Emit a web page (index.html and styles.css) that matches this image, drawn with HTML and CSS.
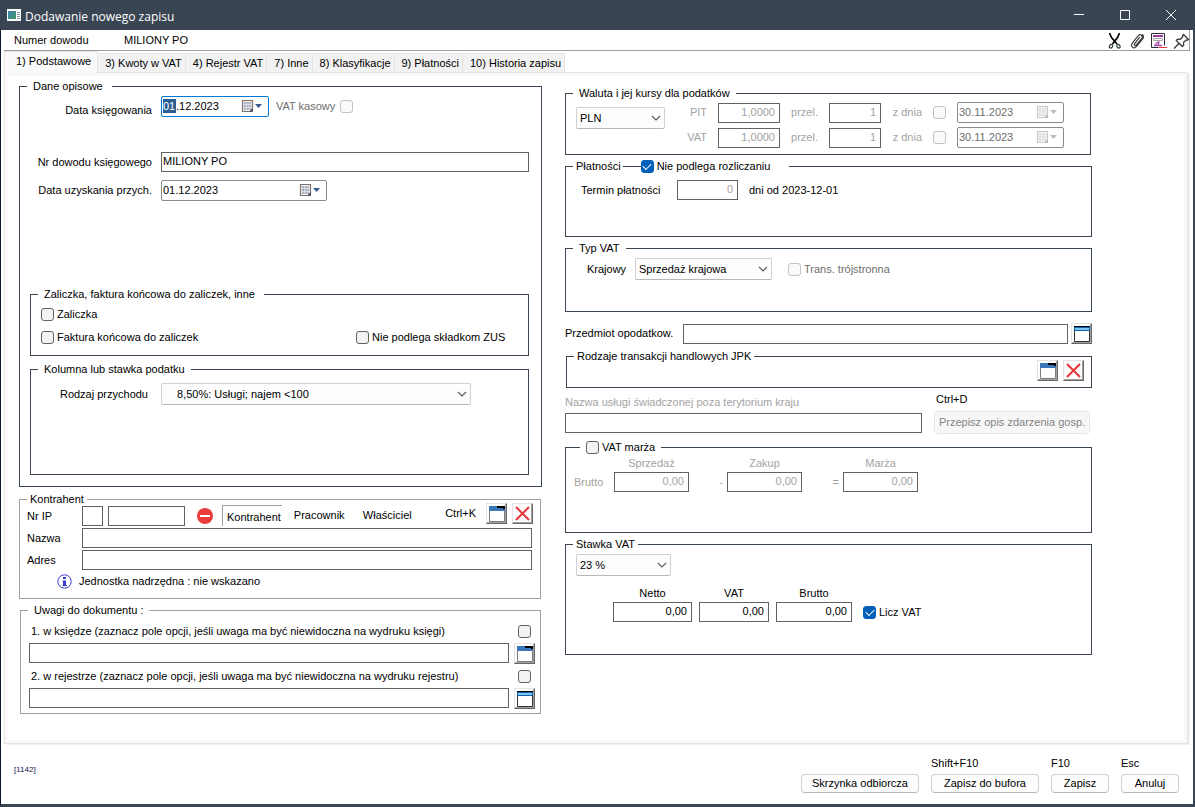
FILE: index.html
```html
<!DOCTYPE html>
<html lang="pl">
<head>
<meta charset="utf-8">
<meta name="viewport" content="width=device-width, initial-scale=1">
<title>Dodawanie nowego zapisu</title>
<link rel="stylesheet" href="styles.css">
</head>
<body>
<svg class="sprite" aria-hidden="true">
  <defs>
    <linearGradient id="app-fill" x1="0" y1="0" x2="1" y2="1"><stop offset="0" stop-color="#3f7fb5"/><stop offset="1" stop-color="#3f9a63"/></linearGradient>
  </defs>
  <symbol id="i-chevron" viewBox="0 0 10 6"><path d="M1 1l4 4 4-4" fill="none" stroke="#5a5a5a" stroke-width="1.1"/></symbol>
  <symbol id="i-calendar" viewBox="0 0 22 14">
    <path d="M1.500 1.500h10v9l-2 2h-8z" fill="#f4f1f0" stroke="#7d7270" stroke-width="1.200"/>
    <path d="M11.500 9.500v3h-2.500z" fill="#55505a" stroke="#55505a"/>
    <path d="M3 3h7v8H3z" fill="#a9afc0"/>
    <path d="M3 5.500h7M3 8.500h7M5.500 3v8M8 3v8" stroke="#fff" stroke-width=".5"/>
    <path d="M14 5h7l-3.500 4z" fill="#3d5a8c"/>
  </symbol>
  <symbol id="i-window" viewBox="0 0 16 16">
    <path d="M.5 3.500h15v12H.5z" fill="#fff" stroke="#7a7a7a"/><path d="M0 0h16v5H0z" fill="#3a76b8"/><path d="M8 0h8v3h-2V2H8z" fill="#000"/>
  </symbol>
  <symbol id="i-window-on" viewBox="0 0 16 16">
    <path d="M.5 3.500h15v12H.5z" fill="#fff" stroke="#333"/><path d="M0 0h16v1H0z" fill="#000"/><path d="M0 1h16v4H0z" fill="#0c62ae"/><path d="M1 2h14v2H1z" fill="#7cc4f2"/>
  </symbol>
  <symbol id="i-delete" viewBox="0 0 16 16"><path d="M1 1l13 13M14 1L1 14" stroke="#e8353a" stroke-width="2"/></symbol>
</svg>

<div class="window">
  <header class="titlebar">
    <svg class="app-icon" width="14" height="12" viewBox="0 0 14 12" aria-hidden="true"><path d="M0 0h14v12H0z" fill="#fff"/><path d="M1 2h8v8H1z" fill="url(#app-fill)"/><path d="M10 3.500h3M10 5.500h3M10 7.500h3M10 9.500h3" stroke="#8b9aa5"/></svg>
    <h1 class="title">Dodawanie nowego zapisu</h1>
    <div class="window-actions">
      <button type="button" aria-label="Minimalizuj"><svg width="10" height="10"><path d="M0 4.500h10" stroke="#fff"/></svg></button>
      <button type="button" aria-label="Maksymalizuj"><svg width="10" height="10"><path d="M.5.5h9v9h-9z" fill="none" stroke="#fff"/></svg></button>
      <button type="button" aria-label="Zamknij"><svg width="10" height="10"><path d="M0 0l10 10M10 0L0 10" stroke="#fff"/></svg></button>
    </div>
  </header>

  <div class="infobar">
    <span class="infobar-label">Numer dowodu</span>
    <span>MILIONY PO</span>
    <div class="tools">
      <button type="button" aria-label="Wytnij"><svg width="16" height="18" viewBox="0 0 16 18"><path d="M2.500 1l2 4.500L10 12M12.500 1l-2 4.500L5.500 12" fill="none" stroke="#000" stroke-width="1.700"/><ellipse cx="4" cy="14.200" rx="1.500" ry="2" fill="none" stroke="#2a3c38" stroke-width="1.200" transform="rotate(35 4 14.200)"/><ellipse cx="11.500" cy="14.200" rx="1.500" ry="2" fill="none" stroke="#2a3c38" stroke-width="1.200" transform="rotate(-35 11.500 14.200)"/></svg></button>
      <button type="button" aria-label="Załącznik"><svg width="16" height="18" viewBox="0 0 16 18"><path d="M10.800 5.200L5.600 11.700c-.9 1.300.8 2.500 1.800 1.300L12.600 6.500c2-2.800-1.300-5.200-3.500-2.700L3.300 11c-2.400 3.300 1.400 6.600 4.200 3.400L13.900 6.700c1.200-2 .2-3.600-.8-4.400" fill="none" stroke="#3c3c3c" stroke-width="1.200"/></svg></button>
      <button type="button" aria-label="Dokument"><svg width="16" height="18" viewBox="0 0 16 18"><path d="M7.500 15.500H.5v-14h13v12" fill="#fff" stroke="#2c2c3a"/><path d="M2 3h10v2H2z" fill="#9a3f9f"/><path d="M2.500 6.500h9v2h-9z" fill="#fff" stroke="#aaa"/><path d="M8.500 10C5 10 4 13 5.500 13.500S9 10.500 7.500 9.500M3 13.500h8" fill="none" stroke="#a84fae" stroke-width="1.300"/><path d="M8 15.500h8" stroke="#e8353a"/></svg></button>
      <button type="button" aria-label="Przypnij"><svg width="16" height="18" viewBox="0 0 16 18"><path d="M10.500 2.500l5 5-1.400.8-1-.3-2.600 2.600.2 2.700-1.400 1.200-6-6 1.200-1.400 2.700.2L9.800 4.700l-.3-1zM6 11.500l-5 5" fill="none" stroke="#3c3c3c" stroke-width="1.300"/></svg></button>
    </div>
  </div>

  <nav class="tabs" role="tablist">
    <button type="button" class="tab active" role="tab" aria-selected="true">1) Podstawowe</button>
    <button type="button" class="tab" role="tab">3) Kwoty w VAT</button>
    <button type="button" class="tab" role="tab">4) Rejestr VAT</button>
    <button type="button" class="tab" role="tab">7) Inne</button>
    <button type="button" class="tab" role="tab">8) Klasyfikacje</button>
    <button type="button" class="tab" role="tab">9) Płatności</button>
    <button type="button" class="tab" role="tab">10) Historia zapisu</button>
  </nav>

  <main class="page">
    <div class="column">
      <fieldset class="panel describe">
        <legend class="wide">Dane opisowe</legend>
        <div class="field-row first">
          <label for="booking-day" class="low">Data księgowania</label>
          <div class="inline">
            <div class="date focused">
              <input id="booking-day" class="day" value="01"><input class="rest" aria-label="Miesiąc i rok" value=".12.2023">
              <button type="button" aria-label="Kalendarz"><svg width="22" height="14"><use href="#i-calendar"/></svg></button>
            </div>
            <label class="check off after">VAT kasowy <input type="checkbox" disabled></label>
          </div>
        </div>
        <div class="field-row">
          <label for="doc-no">Nr dowodu księgowego</label>
          <input id="doc-no" class="box" value="MILIONY PO">
        </div>
        <div class="field-row">
          <label for="income-date">Data uzyskania przych.</label>
          <div class="date long">
            <input id="income-date" class="rest" value="01.12.2023">
            <button type="button" aria-label="Kalendarz"><svg width="22" height="14"><use href="#i-calendar"/></svg></button>
          </div>
        </div>

        <fieldset class="panel advance">
          <legend class="wide">Zaliczka, faktura końcowa do zaliczek, inne</legend>
          <label class="check"><input type="checkbox"> Zaliczka</label>
          <div class="split">
            <label class="check"><input type="checkbox"> Faktura końcowa do zaliczek</label>
            <label class="check"><input type="checkbox"> Nie podlega składkom ZUS</label>
          </div>
        </fieldset>

        <fieldset class="panel rate">
          <legend class="mid">Kolumna lub stawka podatku</legend>
          <div class="rate-row">
            <label for="income-kind">Rodzaj przychodu</label>
            <div class="select indent"><select id="income-kind"><option>8,50%: Usługi; najem &lt;100</option></select><svg width="10" height="6"><use href="#i-chevron"/></svg></div>
          </div>
        </fieldset>
      </fieldset>

      <fieldset class="panel soft partner">
        <legend>Kontrahent</legend>
        <div class="partner-row ids">
          <label for="nip-prefix">Nr IP</label>
          <div class="ids-fields">
            <input id="nip-prefix" class="box prefix"><input class="box nip" aria-label="Numer">
            <button type="button" class="stop" aria-label="Wyczyść"><svg width="16" height="16"><circle cx="8" cy="8" r="8" fill="#ea3a3a"/><path d="M3 8h10" stroke="#fff" stroke-width="2"/></svg></button>
            <div class="kinds">
              <button type="button" class="kind selected">Kontrahent</button>
              <button type="button" class="kind">Pracownik</button>
              <button type="button" class="kind">Właściciel</button>
            </div>
            <div class="shortcuts">
              <span>Ctrl+K</span>
              <button type="button" class="icon-button" aria-label="Wybierz"><svg width="16" height="16"><use href="#i-window"/></svg></button>
              <button type="button" class="icon-button" aria-label="Usuń"><svg width="16" height="16"><use href="#i-delete"/></svg></button>
            </div>
          </div>
        </div>
        <div class="partner-row"><label for="name">Nazwa</label><input id="name" class="box"></div>
        <div class="partner-row"><label for="address">Adres</label><input id="address" class="box"></div>
        <p class="parent-unit"><svg width="15" height="15" viewBox="0 0 15 15" aria-hidden="true"><circle cx="7.500" cy="7.500" r="6.700" fill="none" stroke="#3a3fd0"/><path d="M6 3h3v2H6zM5.500 6.500H9V11h1v1H5.500v-1H6V7.500h-.5z" fill="#3a3fd0"/></svg>Jednostka nadrzędna : nie wskazano</p>
      </fieldset>

      <fieldset class="panel soft notes">
        <legend class="mid">Uwagi do dokumentu :</legend>
        <div class="note-head"><label for="note-book">1. w księdze (zaznacz pole opcji, jeśli uwaga ma być niewidoczna na wydruku księgi)</label><input type="checkbox" aria-label="Ukryj na wydruku księgi"></div>
        <div class="note-body"><input id="note-book" class="box"><button type="button" class="icon-button" aria-label="Wybierz uwagę"><svg width="16" height="16"><use href="#i-window"/></svg></button></div>
        <div class="note-head"><label for="note-reg">2. w rejestrze (zaznacz pole opcji, jeśli uwaga ma być niewidoczna na wydruku rejestru)</label><input type="checkbox" aria-label="Ukryj na wydruku rejestru"></div>
        <div class="note-body"><input id="note-reg" class="box"><button type="button" class="icon-button" aria-label="Wybierz uwagę"><svg width="16" height="16"><use href="#i-window-on"/></svg></button></div>
      </fieldset>
    </div>

    <div class="column right">
      <fieldset class="panel currency">
        <legend class="mid">Waluta i jej kursy dla podatków</legend>
        <div class="currency-body">
          <div class="select cur"><select aria-label="Waluta"><option>PLN</option></select><svg width="10" height="6"><use href="#i-chevron"/></svg></div>
          <div class="rates">
            <div class="rate-line">
              <label for="pit">PIT</label><input id="pit" class="box num" value="1,0000" disabled>
              <label for="pit-per">przel.</label><input id="pit-per" class="box num" value="1" disabled>
              <label for="pit-on">z dnia</label><input id="pit-on" type="checkbox" disabled>
              <div class="date off"><input class="rest" aria-label="Data kursu PIT" value="30.11.2023" disabled><button type="button" aria-label="Kalendarz" disabled><svg width="22" height="14"><use href="#i-calendar"/></svg></button></div>
            </div>
            <div class="rate-line">
              <label for="vat">VAT</label><input id="vat" class="box num" value="1,0000" disabled>
              <label for="vat-per">przel.</label><input id="vat-per" class="box num" value="1" disabled>
              <label for="vat-on">z dnia</label><input id="vat-on" type="checkbox" disabled>
              <div class="date off"><input class="rest" aria-label="Data kursu VAT" value="30.11.2023" disabled><button type="button" aria-label="Kalendarz" disabled><svg width="22" height="14"><use href="#i-calendar"/></svg></button></div>
            </div>
          </div>
        </div>
      </fieldset>

      <fieldset class="panel payment">
        <legend class="with-check"><span>Płatności</span><span class="rule"></span><label class="check"><input type="checkbox" checked> Nie podlega rozliczaniu</label></legend>
        <div class="payment-row">
          <label for="term">Termin płatności</label><input id="term" class="box num" value="0" disabled><span>dni od 2023-12-01</span>
        </div>
      </fieldset>

      <fieldset class="panel vat-type">
        <legend class="mid">Typ VAT</legend>
        <div class="vat-type-row">
          <label for="vat-kind">Krajowy</label>
          <div class="select kind-select"><select id="vat-kind"><option>Sprzedaż krajowa</option></select><svg width="10" height="6"><use href="#i-chevron"/></svg></div>
          <label class="check off"><input type="checkbox" disabled> Trans. trójstronna</label>
        </div>
      </fieldset>

      <div class="subject">
        <label for="subject">Przedmiot opodatkow.</label><input id="subject" class="box">
        <button type="button" class="icon-button" aria-label="Wybierz przedmiot"><svg width="16" height="16"><use href="#i-window-on"/></svg></button>
      </div>

      <fieldset class="panel jpk">
        <legend>Rodzaje transakcji handlowych JPK</legend>
        <div class="jpk-actions">
          <button type="button" class="icon-button" aria-label="Wybierz rodzaj"><svg width="16" height="16"><use href="#i-window"/></svg></button>
          <button type="button" class="icon-button" aria-label="Usuń rodzaj"><svg width="16" height="16"><use href="#i-delete"/></svg></button>
        </div>
      </fieldset>

      <div class="service">
        <label for="service" class="muted">Nazwa usługi świadczonej poza terytorium kraju</label>
        <span class="hint">Ctrl+D</span>
        <input id="service" class="box">
        <button type="button" class="button" disabled>Przepisz opis zdarzenia gosp.</button>
      </div>

      <fieldset class="panel margin">
        <legend class="lead-check"><label class="check"><input type="checkbox"> VAT marża</label></legend>
        <div class="margin-grid muted">
          <span></span><label for="sale">Sprzedaż</label><span></span><label for="buy">Zakup</label><span></span><label for="diff">Marża</label>
          <span>Brutto</span><input id="sale" class="box num" value="0,00" disabled><span class="op">-</span><input id="buy" class="box num" value="0,00" disabled><span class="op">=</span><input id="diff" class="box num" value="0,00" disabled>
        </div>
      </fieldset>

      <fieldset class="panel vat-rate">
        <legend>Stawka VAT</legend>
        <div class="select rate-select"><select aria-label="Stawka VAT"><option>23 %</option></select><svg width="10" height="6"><use href="#i-chevron"/></svg></div>
        <div class="amounts">
          <div class="amount net"><label for="net">Netto</label><input id="net" class="box num" value="0,00"></div>
          <div class="amount tax"><label for="tax">VAT</label><input id="tax" class="box num" value="0,00"></div>
          <div class="amount gross"><label for="gross">Brutto</label><input id="gross" class="box num" value="0,00"></div>
          <label class="check calc"><input type="checkbox" checked> Licz VAT</label>
        </div>
      </fieldset>
    </div>
  </main>

  <footer class="footer">
    <span class="code">[1142]</span>
    <div class="action inbox"><button type="button" class="button">Skrzynka odbiorcza</button></div>
    <div class="action buffer"><span>Shift+F10</span><button type="button" class="button">Zapisz do bufora</button></div>
    <div class="action"><span>F10</span><button type="button" class="button">Zapisz</button></div>
    <div class="action"><span>Esc</span><button type="button" class="button">Anuluj</button></div>
  </footer>
</div>
</body>
</html>
```
FILE: styles.css
```css
* { box-sizing: border-box; }

body {
  margin: 0;
  background: #fff;
  color: #000;
  font: 11px/13px "Liberation Sans", Arial, sans-serif;
}

button, input, select { font: inherit; color: inherit; margin: 0; }
button { padding: 0; border: 0; background: none; }
svg { display: block; }
.sprite { position: absolute; width: 0; height: 0; }

.window {
  display: flex;
  flex-direction: column;
  min-height: 100vh;
  border: solid #3a4553;
  border-width: 0 2px 3px 1px;
  border-left-color: #0c1830;
}

/* Title bar */
.titlebar {
  display: flex;
  align-items: center;
  height: 30px;
  margin: 0 -1px;
  padding-left: 7px;
  background: #3a4553;
  color: #fff;
}
.title { margin: 3px 0 0 4px; font: 12px/16px "Open Sans", "Noto Sans", sans-serif; }
.window-actions { display: flex; margin-left: auto; }
.window-actions button { display: grid; place-items: center; width: 46px; height: 28px; }

/* Document number strip */
.infobar {
  display: flex;
  align-items: center;
  height: 21px;
  margin: 0 3px;
  padding-left: 10px;
  border: solid #a0a0a0;
  border-width: 0 1px 1px 0;
}
.infobar-label { width: 110px; }
.tools { display: flex; gap: 6px; margin-left: auto; padding-top: 2px; }

/* Tabs */
.tabs { display: flex; align-items: flex-end; margin-left: 3px; height: 21px; }
.tab {
  height: 19px;
  padding: 0 3px 0 7px;
  border: 1px solid #e5e5e5;
  border-width: 1px 1px 0 0;
  background: #f2f2f2;
  white-space: nowrap;
}
.tab.active {
  height: 22px;
  margin-bottom: -1px;
  padding: 0 6px 3px 11px;
  border-left-width: 1px;
  background: #f9f9f9;
  z-index: 1;
}

.page {
  flex: 1;
  display: grid;
  grid-template-columns: minmax(0, 523fr) minmax(0, 527fr);
  gap: 23px;
  margin: 0 5px 0 3px;
  padding: 13px 95px 20px 14px;
  border: 1px solid #e5e5e5;
  box-shadow: inset 0 0 0 3px #f9f9f9, 2px 1px 0 #f0f0f0;
}
.right { padding-top: 7px; }

/* Group boxes: the caption is centred on the top rule, --pad is the inner left padding */
.panel { --pad: 0px; min-width: 0; margin: 0; padding: 0 0 0 var(--pad); border: 1px solid #3a4553; }
.panel.soft { border-color: #a0a0a0; }
.column > * + * { margin-top: 11px; }
legend {
  height: 1px;
  margin-left: calc(7px - var(--pad));
  padding: 0 3px;
  line-height: 1px;
  white-space: nowrap;
}
legend.wide { padding: 0 9px 0 6px; }
legend.mid { padding: 0 6px; }

/* Controls */
.box {
  width: 100%;
  min-width: 0;
  height: 20px;
  padding: 0 1px 2px;
  border: 1px solid #626262;
  background: #fff;
}
.num { padding-right: 4px; text-align: right; }
.box:disabled { color: #a3a3a3; }
input:focus { outline: none; }

input[type="checkbox"] {
  appearance: none;
  display: grid;
  place-items: center;
  flex: none;
  width: 13px;
  height: 13px;
  border: 1px solid #626262;
  border-radius: 3px;
  background: #f3f3f3;
}
input[type="checkbox"]:disabled { border-color: #c3c3c3; background: #fafafa; }
input[type="checkbox"]:checked { border-color: #005fb8; background: #005fb8; }
input[type="checkbox"]:checked::after {
  content: "";
  width: 7px;
  height: 4px;
  margin-bottom: 2px;
  border: solid #fff;
  border-width: 0 0 1px 1px;
  transform: rotate(-45deg);
}
.check { display: flex; align-items: center; gap: 3px; white-space: nowrap; }
.check.off { color: #6d6d6d; }
.muted { color: #a3a3a3; }

.select { display: grid; align-items: center; height: 22px; }
.select > * { grid-area: 1 / 1; }
.select select {
  appearance: none;
  width: 100%;
  height: 22px;
  padding: 0 20px 0 3px;
  border: 1px solid #d0d0d0;
  border-bottom-color: #b8b8b8;
  border-radius: 2px;
  background: #fdfdfd;
}
.select svg { justify-self: end; margin-right: 4px; pointer-events: none; }
.select.indent select { padding-left: 15px; }

.date {
  display: flex;
  align-items: center;
  width: 108px;
  height: 21px;
  padding: 0 5px 1px 1px;
  border: 1px solid #8a8a8a;
  border-radius: 2px;
}
.date input { min-width: 0; height: 14px; padding: 0; border: 0; background: none; }
.date .day { width: 13px; background: #2c5f94; color: #fff; }
.date .rest { flex: 1; }
.date.focused { border-color: #0078d4; }
.date.long { width: 166px; }
.date.off input { color: #6d6d6d; }
.date.off svg { opacity: .4; filter: grayscale(1); }

.icon-button {
  display: flex;
  align-items: flex-start;
  flex: none;
  width: 21px;
  height: 21px;
  padding: 2px 0 0 2px;
  border: 1px solid;
  border-color: #e3e3e3 #696969 #696969 #e3e3e3;
  background: #fdfdfd;
  box-shadow: inset -1px -1px #a0a0a0, inset 1px 1px #fff;
}
.icon-button svg { width: 16px; height: 16px; }

.button {
  width: 100%;
  height: 19px;
  border: 1px solid #d0d0d0;
  border-bottom-color: #b8b8b8;
  border-radius: 4px;
  background: #fdfdfd;
  white-space: nowrap;
}
.button:disabled { height: 23px; border-color: #e5e5e5; background: #f7f7f7; color: #838383; }

/* Description */
.describe { --pad: 10px; padding: 9px 12px 11px var(--pad); }
.field-row { display: grid; grid-template-columns: 122px 1fr; align-items: center; gap: 9px; margin-bottom: 8px; }
.field-row > label { text-align: right; white-space: nowrap; }
.field-row .low { align-self: end; }
.field-row.first { margin-bottom: 35px; }
.inline { display: flex; gap: 7px; }
.check.after { gap: 5px; }
.advance { --pad: 10px; min-height: 62px; margin-top: 93px; padding: 13px 10px 0 var(--pad); }
.split { display: grid; grid-template-columns: 315px 1fr; margin-top: 10px; }
.rate { min-height: 106px; margin-top: 13px; padding: 13px 57px 0 0; }
.rate-row { display: grid; grid-template-columns: 117px 1fr; gap: 13px; align-items: center; }
.rate-row label { text-align: right; }

/* Contractor */
.column > .partner { --pad: 7px; margin-top: 12px; margin-right: 1px; min-height: 100px; padding: 3px 8px 0 var(--pad); }
.partner-row { display: grid; grid-template-columns: 55px 1fr; align-items: center; margin-bottom: 2px; }
.partner-row.ids { height: 23px; }
.ids-fields { display: flex; align-items: center; height: 23px; }
.prefix { width: 21px; align-self: end; }
.nip { width: 77px; margin-left: 5px; align-self: end; }
.stop { margin: 3px 9px 0 12px; }
.ids > label { padding-top: 4px; }
.kinds { display: flex; gap: 12px; align-self: end; }
.kind { min-width: 57px; height: 21px; text-align: left; }
.kind.selected { padding: 2px 1px 0 4px; border: solid #a0a0a0; border-width: 1px 0 0 1px; }
.shortcuts { display: flex; align-items: center; align-self: flex-start; gap: 5px; margin-left: auto; margin-right: -1px; }
.shortcuts span { margin-right: 5px; }
.parent-unit { display: flex; align-items: center; gap: 7px; margin: 0 0 0 30px; height: 19px; }

/* Notes */
.notes { --pad: 8px; margin-left: 1px; margin-right: 1px; min-height: 104px; padding: 11px 5px 0 var(--pad); }
.note-head { display: flex; align-items: center; justify-content: space-between; height: 19px; padding: 0 4px 0 2px; white-space: nowrap; }
.note-body { display: flex; gap: 5px; margin: 2px 0 3px; }

/* Currency */
.currency { --pad: 10px; min-height: 62px; padding: 8px 26px 0 var(--pad); margin-right: 1px; }
.currency-body { display: flex; justify-content: space-between; }
.select.cur { width: 89px; margin-top: 5px; }
.rates { display: grid; gap: 4px; color: #a3a3a3; }
.rate-line { display: grid; grid-template-columns: 20px 62px 27px 52px 30px 13px 107px; gap: 0 11px; align-items: center; }
.rate-line > label { white-space: nowrap; text-align: right; }
.rate-line .date { width: 107px; }

/* Payment */
.payment { --pad: 15px; min-height: 71px; padding: 13px 15px 0 var(--pad); }
legend.with-check { display: flex; align-items: center; padding-right: 19px; }
.with-check .rule { width: 18px; height: 1px; margin-left: 2px; background: #3a4553; }
.payment-row { display: grid; grid-template-columns: 85px 61px auto; gap: 11px; align-items: center; justify-content: start; }
.payment-row label { white-space: nowrap; }

.vat-type { --pad: 21px; min-height: 64px; padding: 9px 10px 0 var(--pad); }
.vat-type-row { display: flex; align-items: center; gap: 16px; }
.vat-type-row > label:first-child { width: 32px; white-space: nowrap; }
.kind-select { width: 137px; }

.subject { display: grid; grid-template-columns: 115px 1fr 21px; gap: 3px; align-items: center; white-space: nowrap; }
.column > .jpk { --pad: 7px; min-height: 32px; margin-top: 12px; margin-left: 1px; padding: 3px 7px 0 var(--pad); }
.jpk-actions { display: flex; gap: 5px; justify-content: flex-end; }

.column > .service {
  display: grid;
  grid-template-columns: 1fr 156px;
  gap: 2px 12px;
  align-items: center;
  margin-top: 5px;
  padding-right: 2px;
}
.service label { padding-top: 3px; white-space: nowrap; }
.service .hint { align-self: start; padding-left: 2px; }

.column > .margin { --pad: 8px; min-height: 86px; margin-top: 13px; padding: 9px 8px 0 var(--pad); }
legend.lead-check { margin-left: calc(14px - var(--pad)); padding: 0 6px; }
legend.lead-check .check, legend.with-check .check { height: 1px; }
.margin-grid { display: grid; grid-template-columns: 40px 75px 38px 75px 41px 75px; gap: 2px 0; align-items: center; }
.margin-grid label { text-align: center; }
.op { padding-right: 4px; text-align: right; }

.vat-rate { --pad: 10px; min-height: 111px; padding: 9px 10px 0 var(--pad); }
.rate-select { width: 95px; }
.amounts { display: flex; align-items: flex-end; gap: 7px; margin: 11px 0 0 37px; }
.amount { display: grid; gap: 2px; text-align: center; }
.net { width: 79px; }
.tax { width: 70px; }
.gross { width: 76px; }
.calc { height: 20px; margin-left: 4px; }

/* Footer */
.footer { display: flex; gap: 12px; align-items: flex-end; padding: 13px 14px 11px 13px; }
.code { align-self: flex-start; margin-right: auto; padding-top: 6px; font-size: 8px; color: #10104a; }
.action { display: grid; gap: 4px; width: 58px; }
.action.inbox { width: 118px; }
.action.buffer { width: 108px; }
```
